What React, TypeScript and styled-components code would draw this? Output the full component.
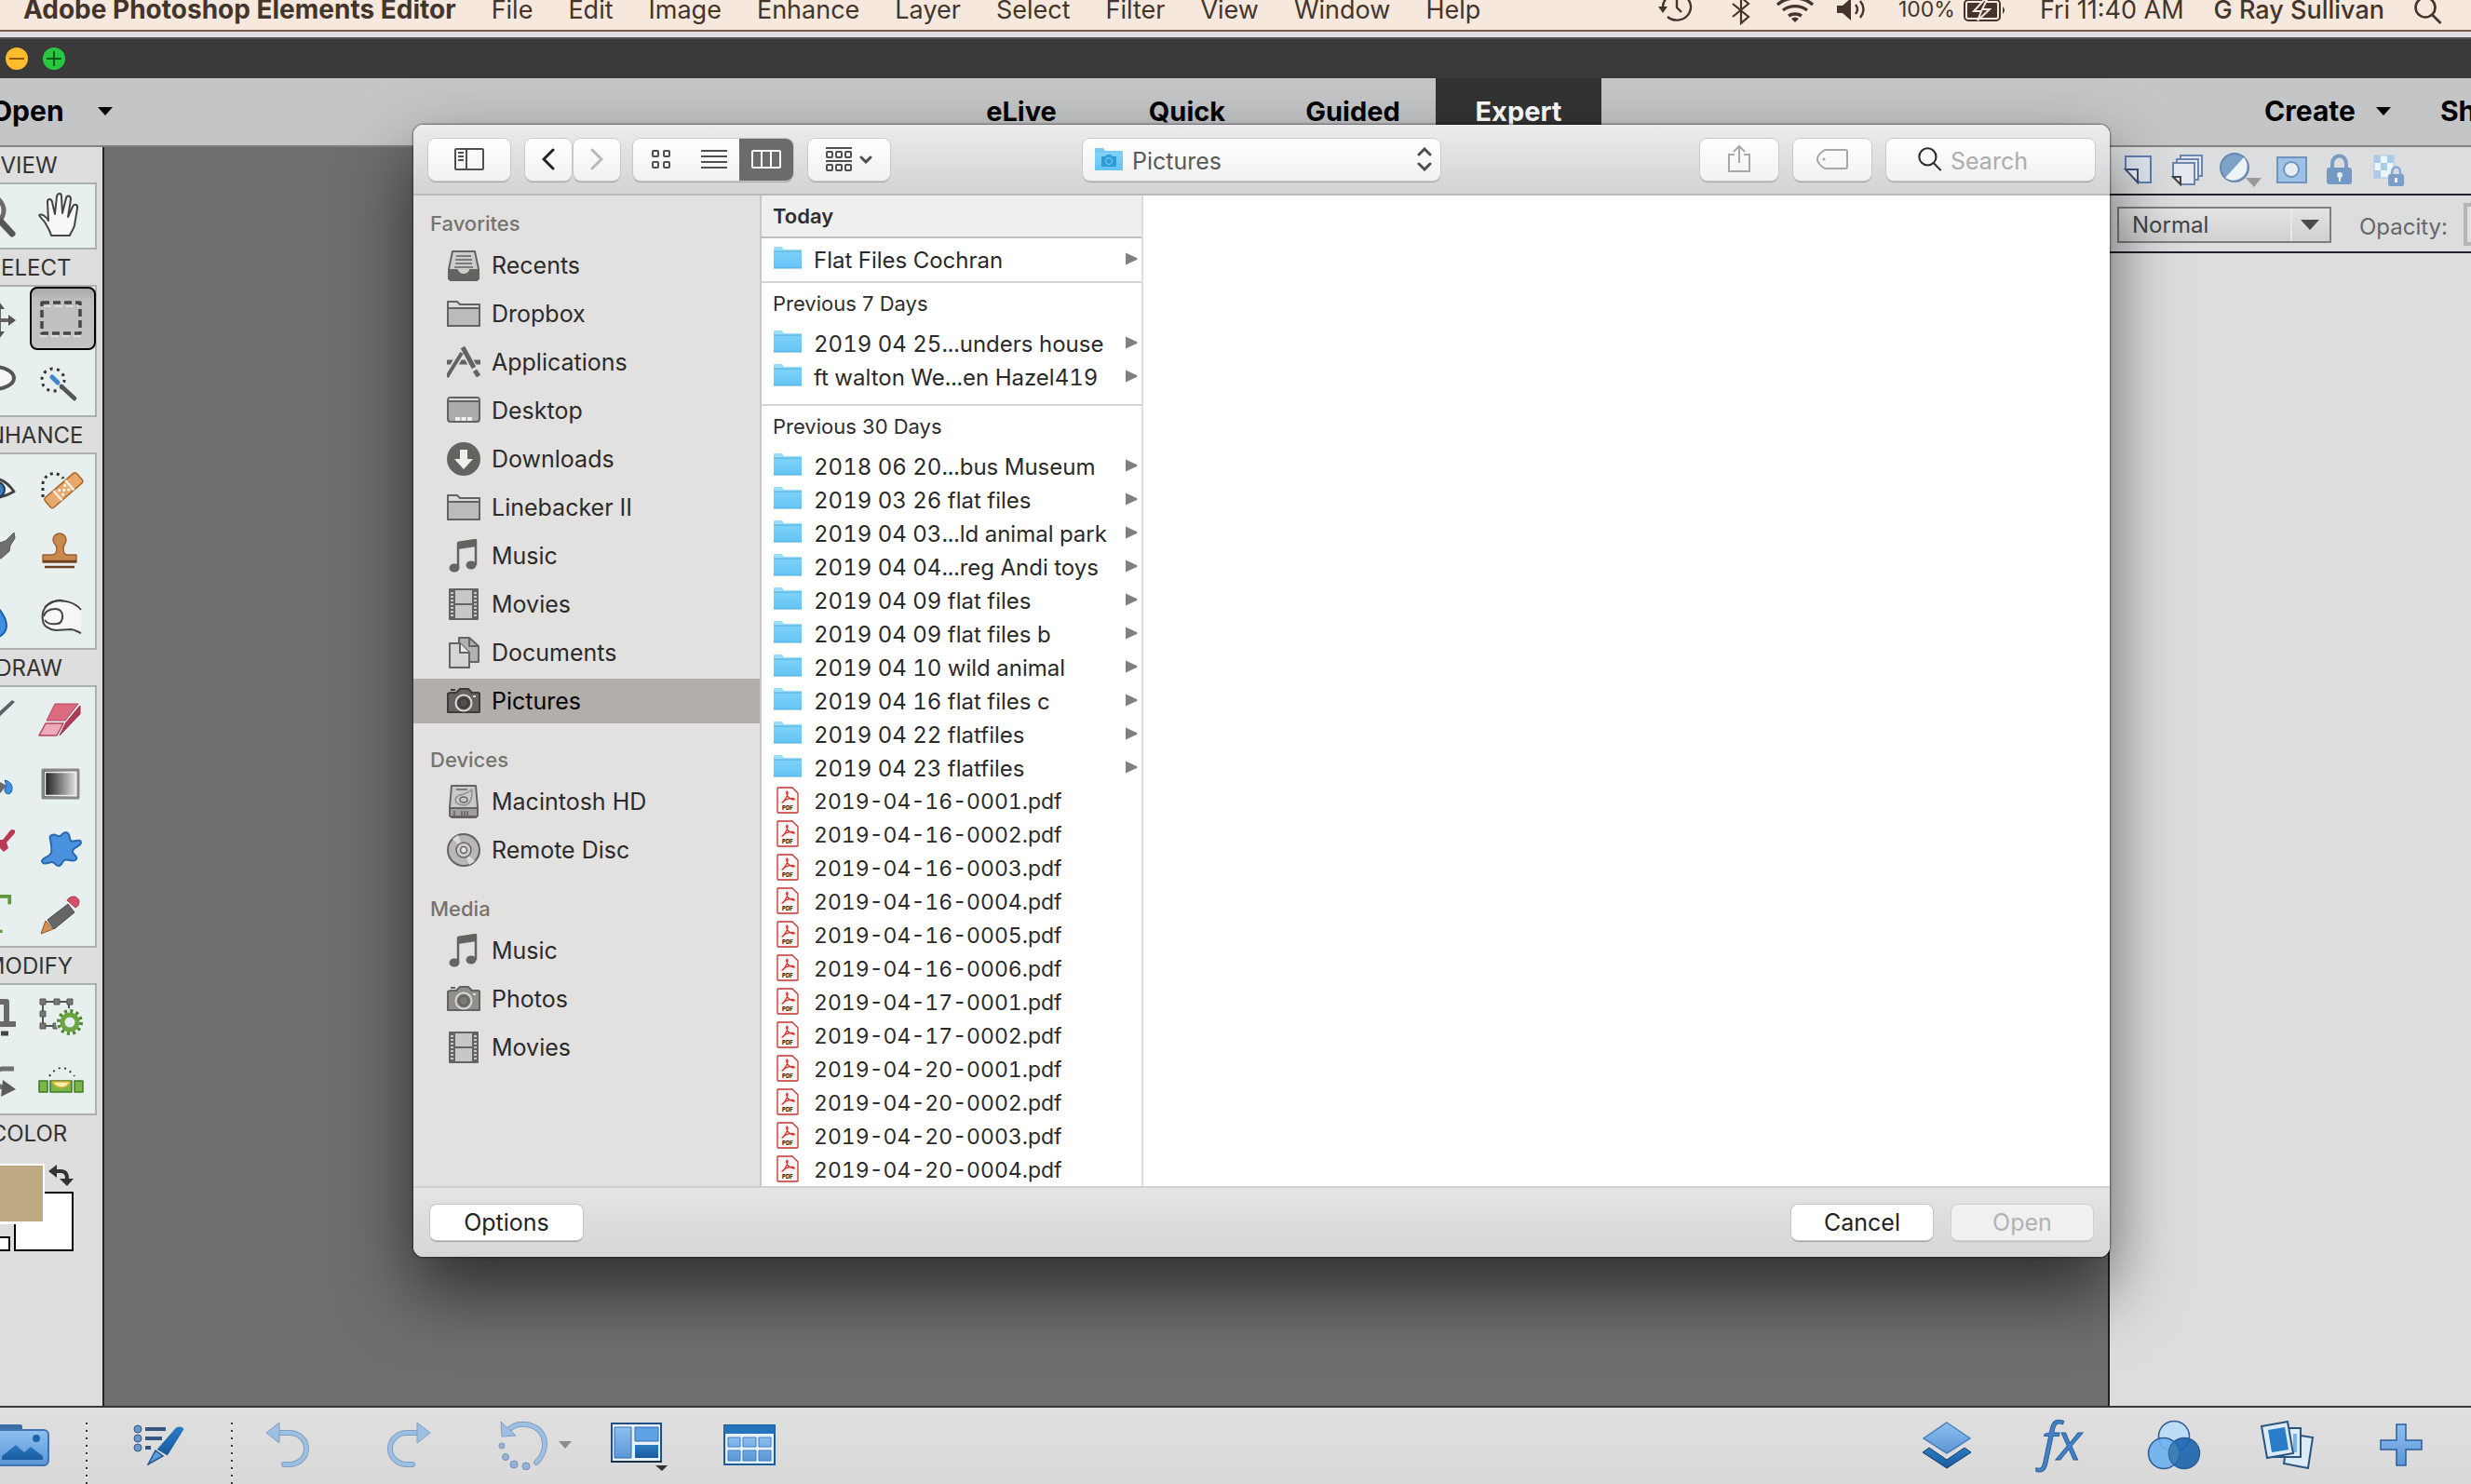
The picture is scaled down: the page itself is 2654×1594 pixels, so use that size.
import React from 'react';
import styled, { createGlobalStyle, css } from 'styled-components';

const GlobalStyle = createGlobalStyle`
  * { box-sizing: border-box; }
  body { margin: 0; background: #6e6e6e; overflow: hidden; }
  button, select, input { font: inherit; color: inherit; margin: 0; }
  button { border: 0; padding: 0; background: none; }
  ul { list-style: none; margin: 0; padding: 0; }
  h2, h3 { margin: 0; font-weight: inherit; font-size: inherit; }
  svg { display: block; flex: none; }
`;

const Screen = styled.div`
  position: relative;
  display: flex;
  flex-direction: column;
  height: 100vh;
  overflow: hidden;
  font-family: Inter, 'Liberation Sans', sans-serif;
  color: #2a2a2a;
`;

/* ---------- system menu bar ---------- */

const MenuBar = styled.nav`
  flex: none;
  display: flex;
  align-items: flex-start;
  justify-content: space-between;
  height: 34px;
  padding: 0 31px 0 25px;
  background: #f6e8dc;
  border-bottom: 2px solid #79594c;
  color: #43352b;
  font-size: 27px;
  line-height: 21px;
  white-space: nowrap;
`;

const MenuGroup = styled.div<{ $gap: number }>`
  display: flex;
  align-items: center;
  gap: ${(p) => p.$gap}px;
  height: 21px;
`;

const MenuItem = styled.button<{ $app?: boolean }>`
  line-height: 21px;
  font-size: ${(p) => (p.$app ? 28 : 27)}px;
  font-weight: ${(p) => (p.$app ? 700 : 400)};
`;

const Battery = styled.div`
  display: flex;
  align-items: center;
  gap: 9px;
  padding-right: 4px;
  font-size: 23px;
`;

const UserName = styled.span`
  font-weight: 500;
`;

/* ---------- editor window ---------- */

const TitleBar = styled.div`
  flex: none;
  display: flex;
  align-items: center;
  gap: 16px;
  height: 50px;
  padding: 8px 6px 0;
  background: linear-gradient(#dedee2 0 6px, #55565a 6px 8px, #3a3a3a 8px);
`;

const Light = styled.button<{ $color: string; $mark: string }>`
  display: grid;
  place-items: center;
  width: 24px;
  height: 24px;
  border-radius: 50%;
  background: ${(p) => p.$color};
  color: ${(p) => p.$mark};
`;

const ModeBar = styled.header`
  flex: none;
  display: grid;
  grid-template-columns: 1fr auto 1fr;
  width: calc(100% + 74px);
  height: 74px;
  padding-bottom: 2px;
  background: #c4c5c7;
  border-bottom: 2px solid #808284;
  color: #000;
  font-size: 29px;
  font-weight: 700;
`;

const ModeSide = styled.div<{ $end?: boolean }>`
  display: flex;
  align-items: center;
  gap: 53px;
  font-size: 30px;
  justify-content: ${(p) => (p.$end ? 'flex-end' : 'flex-start')};
  ${(p) => (p.$end ? 'padding-right: 22px;' : 'margin-left: -10px;')}
`;

const DropButton = styled.button<{ $gap: number }>`
  display: flex;
  align-items: center;
  gap: ${(p) => p.$gap}px;
`;

const Tabs = styled.div`
  display: flex;
`;

const Tab = styled.button<{ $on?: boolean }>`
  width: 178px;
  ${(p) => p.$on && css`background: #333; color: #fff;`}
`;

const Workspace = styled.div`
  flex: 1;
  display: flex;
  min-height: 0;
`;

const ToolPanel = styled.aside`
  flex: none;
  width: 160px;
  margin-left: -48px;
  padding: 0 6px;
  background: #dedede;
  border-right: 2px solid #242424;
`;

const ToolHeading = styled.h2`
  height: 38px;
  line-height: 40px;
  text-align: center;
  font-size: 24px;
  color: #333;
`;

const ToolBox = styled.div`
  display: grid;
  grid-template-columns: 1fr 1fr;
  grid-auto-rows: 70px;
  padding: 1px 0;
  background: #e8efef;
  box-shadow: inset 0 0 0 2px #acb0b0;
`;

const Tool = styled.button<{ $on?: boolean }>`
  display: grid;
  place-items: center;
  margin: 1px;
  ${(p) =>
    p.$on &&
    css`
      border: 2px solid #000;
      border-radius: 8px;
      background: linear-gradient(#a9a9a9, #bfbfbf 20%, #c2c2c2);
    `}
`;

const Swatches = styled.div`
  display: flex;
  padding-top: 14px;
`;

const Canvas = styled.main`
  flex: 1;
  background: #6e6e6e;
`;

const LayerPanel = styled.aside`
  flex: none;
  width: 390px;
  background: #dcdddf;
  border-left: 2px solid #202022;
`;

const LayerTools = styled.div`
  display: flex;
  align-items: center;
  height: 52px;
  padding-left: 14px;
  gap: 10px;
  border-bottom: 2px solid #20202a;
`;

const BlendRow = styled.div`
  display: flex;
  align-items: center;
  height: 62px;
  padding: 2px 0 0 8px;
  border-bottom: 2px solid #20202a;
  font-size: 24px;
  color: #666;
`;

const BlendBox = styled.div`
  flex: none;
  display: flex;
  align-items: center;
  width: 230px;
  height: 39px;
  margin-right: 30px;
  padding-right: 11px;
  border: 2px solid #7c7e80;
  background: linear-gradient(#e4e4e4, #d0d0d0);
`;

const BlendSelect = styled.select`
  appearance: none;
  flex: 1;
  height: 35px;
  margin-right: 9px;
  padding: 2px 14px 0;
  border: 0;
  border-right: 2px solid #e8e8e8;
  background: none;
  font-size: 24px;
  line-height: 30px;
  color: #444;
`;

const OpacityLabel = styled.label`
  padding-top: 4px;
`;

const OpacityInput = styled.input`
  flex: none;
  width: 100px;
  height: 46px;
  margin-left: 17px;
  border: 4px solid #b4b5b7;
  background: #e0e0e0;
`;

/* ---------- bottom bar ---------- */

const BottomBar = styled.footer`
  flex: none;
  display: flex;
  justify-content: space-between;
  height: 84px;
  border-top: 2px solid #38383b;
  background: linear-gradient(#dfdfdf, #d9d9d9);
`;

const BarGroup = styled.div`
  display: flex;
  margin-left: -48px;
  padding-right: 14px;
`;

const BarButton = styled.button<{ $w: number }>`
  display: grid;
  place-items: center;
  width: ${(p) => p.$w}px;
  height: 80px;
`;

const Dots = styled.div`
  width: 2px;
  margin-top: 16px;
  background: repeating-linear-gradient(#333 0 2px, #f6f6f6 2px 4px, transparent 4px 8px);
`;

/* ---------- open dialog ---------- */

const Dialog = styled.section`
  position: absolute;
  inset: 134px 388px 244px 444px;
  display: flex;
  flex-direction: column;
  overflow: hidden;
  border-radius: 11px;
  background: #fff;
`;

const DialogShadow = styled.div`
  position: absolute;
  inset: 134px 388px 244px 444px;
  border-radius: 11px;
  box-shadow: 0 0 2px 1px rgba(0, 0, 0, 0.45), 0 36px 76px rgba(0, 0, 0, 0.58);
`;

const Toolbar = styled.div`
  flex: none;
  display: flex;
  align-items: center;
  height: 76px;
  padding: 0 16px;
  background: linear-gradient(#edebed, #d4d2d5);
  border-bottom: 2px solid #bab9bb;
  font-size: 25px;
`;

const Spacer = styled.div<{ $grow?: number }>`
  flex: ${(p) => p.$grow ?? 1} 1 0;
`;

const Cluster = styled.div<{ $gap: number; $mr?: number }>`
  display: flex;
  gap: ${(p) => p.$gap}px;
  margin-right: ${(p) => p.$mr ?? 0}px;
`;

const raised = css`
  height: 45px;
  border-radius: 8px;
  background: linear-gradient(#fff, #f2f1f2);
  box-shadow: 0 0 0 1px #c9c7ca, 0 2px 1px #a8a6a9;
`;

const ToolbarButton = styled.button<{ $w: number }>`
  ${raised}
  display: flex;
  align-items: center;
  justify-content: center;
  gap: 8px;
  width: ${(p) => p.$w}px;
`;

const Segments = styled.div`
  ${raised}
  display: flex;
  overflow: hidden;
`;

const Segment = styled.button<{ $w: number; $on?: boolean }>`
  display: grid;
  place-items: center;
  width: ${(p) => p.$w}px;
  height: 45px;
  ${(p) => p.$on && css`background: #6b6b6b;`}
  & + & { border-left: ${(p) => (p.$on ? 0 : 2)}px solid #dcdcdc; }
`;

const PathBox = styled.div`
  ${raised}
  display: flex;
  align-items: center;
  width: 384px;
  padding: 0 9px 0 13px;
`;

const PathSelect = styled.select`
  appearance: none;
  flex: 1;
  height: 43px;
  padding: 3px 10px 0;
  border: 0;
  background: none;
  font-size: 25px;
  color: #5a595a;
`;

const SearchBox = styled.label`
  ${raised}
  display: flex;
  align-items: center;
  gap: 9px;
  width: 224px;
  padding-left: 34px;
`;

const SearchInput = styled.input`
  min-width: 0;
  flex: 1;
  padding: 3px 0 0;
  border: 0;
  background: none;
  font-size: 25px;
  &::placeholder { color: #adacad; opacity: 1; }
`;

const Body = styled.div`
  flex: 1;
  display: flex;
  min-height: 0;
`;

const Sidebar = styled.nav`
  flex: none;
  width: 374px;
  padding-top: 14px;
  background: #e2e1df;
  border-right: 2px solid #c8c7c6;
`;

const SideGroup = styled.div`
  margin-bottom: 23px;
`;

const SideHeading = styled.h3`
  padding-left: 18px;
  margin-bottom: 5px;
  line-height: 32px;
  font-size: 22px;
  font-weight: 500;
  color: #75736f;
`;

const SideList = styled.ul`
  display: flex;
  flex-direction: column;
  gap: 4px;
`;

const SideItem = styled.button<{ $on?: boolean }>`
  display: flex;
  align-items: center;
  gap: 12px;
  width: 100%;
  height: 48px;
  padding-left: 36px;
  font-size: 25px;
  color: ${(p) => (p.$on ? '#000' : '#2c2b2a')};
  background: ${(p) => (p.$on ? '#b2aeaa' : 'transparent')};
  svg { color: ${(p) => (p.$on ? '#3d3b39' : '#656360')}; }
`;

const FileColumn = styled.div`
  flex: none;
  width: 410px;
  overflow: hidden;
  background: #fff;
  border-right: 2px solid #dcdcdc;
`;

const FileHeading = styled.h3<{ $top?: boolean }>`
  height: 44px;
  line-height: 44px;
  padding-left: 12px;
  font-size: 22px;
  color: #2e2e2e;
  ${(p) =>
    p.$top &&
    css`
      height: 46px;
      font-weight: 600;
      background: #efefef;
      border-bottom: 2px solid #bdbdbd;
    `}
`;

const FileList = styled.ul<{ $short?: boolean }>`
  padding: ${(p) => (p.$short ? '5px 0' : '3px 0 11px')};
  border-bottom: 2px solid #d4d4d4;
`;

const FileRow = styled.li<{ $size: number }>`
  display: flex;
  align-items: center;
  gap: 13px;
  height: 36px;
  padding: 0 4px 0 13px;
  font-size: ${(p) => p.$size}px;
  font-variant-numeric: tabular-nums;
  white-space: nowrap;
`;

const FileName = styled.span`
  flex: 1;
`;

const Actions = styled.div`
  flex: none;
  display: flex;
  align-items: center;
  gap: 20px;
  height: 76px;
  padding: 0 18px;
  background: linear-gradient(#e4e4e4, #d6d6d6);
  border-top: 2px solid #cfcfcf;
  font-size: 25px;
`;

const ActionButton = styled.button<{ $w: number }>`
  width: ${(p) => p.$w}px;
  height: 38px;
  border-radius: 7px;
  background: #fff;
  color: #232323;
  box-shadow: 0 0 0 1px #c6c6c6, 0 2px 1px #a2a2a2;
  &:disabled {
    background: #f0f0f0;
    color: #b2b2b2;
    box-shadow: 0 0 0 1px #d0d0d0, 0 2px 1px #c0c0c0;
  }
`;

/* ---------- drawings ---------- */

const Gradients = () => (
  <svg width="0" height="0" aria-hidden="true">
    <defs>
      <linearGradient id="lb" x1="0" y1="0" x2="0" y2="1"><stop offset="0" stopColor="#8fc0f0" /><stop offset="1" stopColor="#5a96d6" /></linearGradient>
      <linearGradient id="db" x1="0" y1="0" x2="0" y2="1"><stop offset="0" stopColor="#2a7cc4" /><stop offset="1" stopColor="#1a5a9e" /></linearGradient>
      <linearGradient id="fold" x1="0" y1="0" x2="0" y2="1"><stop offset="0" stopColor="#7fd2fa" /><stop offset="1" stopColor="#62c4f6" /></linearGradient>
      <linearGradient id="bw"><stop offset="0" stopColor="#111" /><stop offset="1" stopColor="#eee" /></linearGradient>
    </defs>
  </svg>
);

const HiddenDefs = styled.div`
  position: absolute;
  width: 0;
  height: 0;
`;

const Triangle = ({ w = 16, h = 9, fill = '#000' }: { w?: number; h?: number; fill?: string }) => (
  <svg width={w} height={h} viewBox="0 0 16 9" preserveAspectRatio="none"><path d="M0 0h16L8 9z" fill={fill} /></svg>
);

const ClockIcon = () => (
  <svg width="52" height="32" viewBox="0 0 52 32" fill="none" stroke="currentColor" strokeWidth="2.4">
    <path d="M5 13a15 14 0 1 1 5 10" /><path d="M20 4v9l5 5" /><path d="M0 12h10l-5 7z" fill="currentColor" stroke="none" />
  </svg>
);
const BluetoothIcon = () => (
  <svg width="26" height="32" viewBox="0 0 26 32" fill="none" stroke="currentColor" strokeWidth="2.2">
    <path d="M4 9l17 14-8 7V2l8 7L4 23" />
  </svg>
);
const WifiIcon = () => (
  <svg width="42" height="32" viewBox="0 0 42 32" fill="none" stroke="currentColor" strokeWidth="3.4">
    <path d="M2 10a27 24 0 0 1 38 0M8 16a19 16 0 0 1 26 0M14 22a11 9 0 0 1 14 0" /><path d="M21 29l-4-4a6 6 0 0 1 8 0z" fill="currentColor" stroke="none" />
  </svg>
);
const VolumeIcon = () => (
  <svg width="34" height="32" viewBox="0 0 34 32" fill="none" stroke="currentColor" strokeWidth="2.4">
    <path d="M0 11h6l9-8v24l-9-8H0z" fill="currentColor" stroke="none" /><path d="M20 10q4 5 0 10M25 6q7 9 0 18" />
  </svg>
);
const BatteryIcon = () => (
  <svg width="46" height="26" viewBox="0 0 46 26">
    <rect x="1" y="2" width="38" height="22" rx="4" fill="none" stroke="currentColor" strokeWidth="2" />
    <rect x="4" y="5" width="32" height="16" rx="1" fill="currentColor" /><path d="M42 9q4 4 0 8z" fill="currentColor" />
    <path d="M22 2L11 14h8l-4 10L28 12h-8l5-10z" fill="currentColor" stroke="#f6e8dc" strokeWidth="2" />
  </svg>
);
const LoupeIcon = ({ s = 30, w = 2.6 }: { s?: number; w?: number }) => (
  <svg width={s} height={s} viewBox="0 0 30 30" fill="none" stroke="currentColor" strokeWidth={w}>
    <circle cx="12" cy="12" r="10.500" /><path d="M19.500 20l9 9" />
  </svg>
);

/* editor tools */
const T = ({ children }: { children: React.ReactNode }) => (
  <svg width="48" height="48" viewBox="2 0 48 48" fill="none" strokeLinejoin="round" overflow="visible">{children}</svg>
);
const toolArt: Record<string, React.ReactNode> = {
  Zoom: <T><circle cx="20" cy="18" r="15" stroke="#6b6b6b" strokeWidth="5" fill="#eef3f5" /><path d="M32 30l12 13" stroke="#555" strokeWidth="7" strokeLinecap="round" /></T>,
  Hand: <T><path d="M13 45c-1-5-4-9-6-13-2-4-6-6-7-9 3-2 8 2 10 6L9 9c0-4 4-4 5 0l3 13L19 3c1-4 5-4 5 0l1 18 4-16c1-4 5-3 5 1l-3 19 5-11c2-4 6-2 5 2l-3 18c-1 5-4 7-5 11z" fill="#f7f7f7" stroke="#444" strokeWidth="2" /></T>,
  Move: <T><path d="M30 10v32M12 26h34" stroke="#666" strokeWidth="4" /><path d="M30 6l6 8H24zM30 46l6-8H24zM48 26l-8-6v12z" fill="#555" /></T>,
  Marquee: <T><rect x="3" y="7" width="41" height="33" stroke="#444" strokeWidth="3.500" strokeDasharray="8 4" /><path d="M5 11h38M1 43h44" stroke="#e6e6e6" strokeWidth="1.500" strokeDasharray="8 4" /></T>,
  Lasso: <T><ellipse cx="24" cy="18" rx="22" ry="12" stroke="#555" strokeWidth="4" fill="#f4f6f7" /></T>,
  Wand: <T><circle cx="15" cy="20" r="12" stroke="#333" strokeWidth="3" strokeDasharray="3 4.540" /><path d="M12 15l12 11" stroke="#e8efef" strokeWidth="8" /><path d="M14 17l6 6" stroke="#3f87d0" strokeWidth="5" strokeLinecap="round" /><path d="M24 27l14 13" stroke="#555" strokeWidth="4.500" strokeLinecap="round" /></T>,
  Eye: <T><path d="M-4 24Q28 4 46 30 26 42-4 34z" fill="#f4f6f7" stroke="#444" strokeWidth="3" /><circle cx="28" cy="28" r="8" fill="#3b7cb8" stroke="#235" strokeWidth="2" /></T>,
  Heal: <T><path d="M4 36V22a12 12 0 0 1 22-6" stroke="#333" strokeWidth="3" strokeDasharray="3 4" /><g transform="rotate(-41 26 29)"><rect x="4" y="22" width="45" height="14" rx="3" fill="#e9a86c" stroke="#a5692f" strokeWidth="1.500" /><path d="M18 22v14M35 22v14" stroke="#fbeee0" strokeWidth="2.500" /><g fill="#fff"><circle cx="23" cy="26" r="1.500" /><circle cx="27" cy="29" r="1.500" /><circle cx="31" cy="26" r="1.500" /><circle cx="23" cy="32" r="1.500" /><circle cx="31" cy="32" r="1.500" /></g></g></T>,
  SmartBrush: <T><path d="M46 4l-9 9-9 3-8 12 12 4 9-8 1-6 5-8z" fill="#6f6f6f" stroke="#555" /></T>,
  Stamp: <T><path d="M15 12a7 7 0 1 1 14 0c0 4-3 5-3 9 0 5 2 7 4 7h10v8H4v-8h10c3 0 5-3 5-7 0-4-4-5-4-9z" fill="#c98a50" stroke="#9c6230" strokeWidth="1.500" /><path d="M4 35h36M6 41h32" stroke="#6d4020" strokeWidth="2.500" /></T>,
  Blur: <T><path d="M22 6c10 12 16 20 16 28a14 12 0 0 1-32 0C6 26 12 18 22 6z" fill="#3f8fe0" stroke="#1d5fa8" strokeWidth="2" /></T>,
  Sponge: <T><path d="M45 17C38 8 24 6 16 8 8 10 2 18 4 28c0 6 6 10 14 11l16-1c4 0 8 3 11 4" fill="#f7f7f7" stroke="#444" strokeWidth="2" /><path d="M6 14Q20 4 26 8M5 24c2-8 14-10 18-6 4 5 2 14-4 14-6 1-10 0-13-4" stroke="#444" strokeWidth="2" /></T>,
  Brush: <T><path d="M47 6L26 26l-6 8-12 8 6-14 10-6L44 4z" fill="#5d6063" /></T>,
  Eraser: <T><path d="M17 8h25L28 26H8z" fill="#dc6b80" stroke="#b8455c" /><path d="M44 10v9L22 42l7-14z" fill="#b23a56" stroke="#96304a" /><path d="M7 29h19l-7 13H0z" fill="#eeaab8" stroke="#b8455c" strokeWidth="1.500" /></T>,
  Bucket: <T><path d="M10 10l28 16-12 14-20-8z" fill="#6a6a6a" /><path d="M36 20c6 1 10 6 7 13-2 3-7 2-7-2 0-3 3-4 0-11z" fill="#3f8fe0" stroke="#1d5fa8" /></T>,
  Gradient: <T><rect x="4" y="9" width="38" height="30" fill="url(#bw)" stroke="#888" strokeWidth="3" /><rect x="6.500" y="11.500" width="33" height="25" stroke="#eee" strokeWidth="1.500" /></T>,
  Picker: <T><path d="M26 14l8 0 8-10c4-3 7 1 4 4l-8 9 2 6-5 4-10-10z" fill="#b93a52" /><path d="M30 20L10 42" stroke="#666" strokeWidth="4" /></T>,
  Shape: <T><path d="M12 14c-2-5 4-7 8-4 4 2 4-4 9-4 5 1 3 7 5 9 4 2 11-3 11 2 0 4-8 5-9 9-1 4 6 5 4 9-3 4-9-1-13 1-3 2-2 6-6 6s-4-5-8-4c-4 1-9 3-10-1 0-4 8-4 10-9 1-5 0-9-1-14z" fill="#4a92dd" stroke="#2a68ad" strokeWidth="2" /></T>,
  Type: <T><text x="2" y="44" fontFamily="DejaVu Serif, serif" fontSize="56" fontWeight="700" fill="#5d9a3c">T</text></T>,
  Pencil: <T><path d="M9 30l22-17 7 9-22 18z" fill="#666" stroke="#484848" /><path d="M30 9c3-5 11-6 13 1 0 4-2 6-4 7z" fill="#d4506a" stroke="#a83850" /><path d="M7 31l8 9-13 5z" fill="#d29055" stroke="#905a28" /></T>,
  Crop: <T><path d="M12 8h26v26M16 32h32" stroke="#6a6a6a" strokeWidth="6" /><path d="M32 42h8" stroke="#444" strokeWidth="5" /></T>,
  Recompose: <T><path d="M4 8h28v26H4z" stroke="#555" strokeWidth="2" /><path d="M1 5h6v6H1zM16 5h6v6h-6zM30 5h6v6h-6zM1 18h6v6H1zM1 31h6v6H1zM15 31h6v6h-6z" fill="#777" stroke="#555" /><circle cx="33" cy="30" r="15" fill="#e8efef" /><circle cx="33" cy="30" r="12" stroke="#4c8a2c" strokeWidth="4" strokeDasharray="3 3.280" /><circle cx="33" cy="30" r="8" stroke="#6aa544" strokeWidth="5" /></T>,
  Move2: <T><path d="M46 10H34q-10 1-12 10 2 8 18 12" stroke="#707070" strokeWidth="5" /><path d="M34 22l14 10-16 8z" fill="#5c5c5c" /></T>,
  Straighten: <T><path d="M11 18Q24 0 38 18" stroke="#333" strokeWidth="2" strokeDasharray="2 4.500" /><path d="M0 23h9v12H0zM12 23h23v12H12zM38 23h9v12h-9z" fill="#7ab648" stroke="#3f7a22" strokeWidth="1.500" /><path d="M14 24h19q-3 6-9 6t-10-6z" fill="#fff2b0" stroke="#e0b030" strokeWidth="1.500" /></T>,
};

/* layer panel */
const layerArt: [string, React.ReactNode][] = [
  ['New layer', <svg width="40" height="36" viewBox="0 0 40 36"><path d="M3 3h27v28H18L3 17z" fill="#dfe6ef" stroke="#5f7fae" strokeWidth="2" /><path d="M3 17h13v14z" fill="#f0f3f7" stroke="#3d5478" strokeWidth="2" /></svg>],
  ['New group', <svg width="42" height="36" viewBox="0 0 42 36" fill="#e6eaf0" stroke="#6d86ad" strokeWidth="2"><path d="M12 2h23v22H12z" /><path d="M8 6h23v22H8z" /><path d="M4 10h23v23H13l-9-8z" /><path d="M4 25h8v8z" stroke="#444" /></svg>],
  ['Adjustment layer', <svg width="48" height="40" viewBox="0 0 48 40"><circle cx="18" cy="17" r="15" fill="#7da2c8" stroke="#6488b0" strokeWidth="2" /><path d="M28 6A15 15 0 0 1 8 28z" fill="#eef2f7" /><path d="M30 28h17l-8 10z" fill="#9a9a9a" /></svg>],
  ['Add mask', <svg width="42" height="36" viewBox="0 0 42 36"><rect x="6" y="4" width="31" height="27" fill="#9dc2e6" stroke="#6f94bd" strokeWidth="2" /><circle cx="21" cy="17" r="8" fill="#e8eef4" stroke="#6f94bd" strokeWidth="2" /></svg>],
  ['Lock', <svg width="42" height="36" viewBox="0 0 42 36"><path d="M13 17v-6a7 8 0 0 1 15 0v6" fill="none" stroke="#7a9cc2" strokeWidth="4" /><rect x="7" y="15" width="27" height="18" rx="3" fill="#7399c4" /><circle cx="21" cy="23" r="3" fill="#e4ecf4" /><path d="M20 23h2v7h-2z" fill="#e4ecf4" /></svg>],
  ['Lock transparency', <svg width="42" height="38" viewBox="0 0 42 38"><rect x="6" y="3" width="21" height="24" fill="#eef5fb" stroke="#a6c5e0" /><path d="M6 3h7v8H6zM20 3h7v8h-7zM13 11h7v8h-7zM6 19h7v8H6z" fill="#a9cce8" /><path d="M25 24v-3a4 5 0 0 1 9 0v3" fill="none" stroke="#86a8cc" strokeWidth="2.500" /><rect x="21" y="23" width="17" height="13" rx="2" fill="#7b9fc8" /><path d="M28 27h3v5h-3z" fill="#eef" /></svg>],
];

/* dialog icons */
const S = ({ children }: { children: React.ReactNode }) => (
  <svg width="36" height="36" viewBox="0 0 36 36" fill="none" stroke="currentColor" strokeWidth="2" strokeLinejoin="round">{children}</svg>
);
const folderLine = <S><path d="M1 31V5h10l3 3h21v23z" fill="#dddcda" /><path d="M1 12h34v19H1z" fill="#bdbbb9" /></S>;
const music = <S><path d="M12 30V4l19-3v27" strokeWidth="2.500" /><path d="M12 3l19-3v8l-19 3z" fill="currentColor" stroke="none" /><ellipse cx="8" cy="31" rx="5.500" ry="4.500" fill="currentColor" stroke="none" /><ellipse cx="26" cy="28" rx="5.500" ry="4.500" fill="currentColor" stroke="none" /></S>;
const movies = <S><path d="M3 2h30v32H3z" fill="#c9c7c5" /><path d="M8 2v32M28 2v32M8 18h20" /><path d="M5.500 3v30M30.500 3v30" strokeWidth="3.500" strokeDasharray="2 2" /></S>;
const camera = <S><path d="M1 10l3-1h6l4-4h9l4 4h7l1 1v20H1z" fill="currentColor" fillOpacity="0.650" /><path d="M4 6h5" /><circle cx="18" cy="20" r="8.500" stroke="#dddbd8" strokeWidth="2" fill="currentColor" fillOpacity="0.500" /><circle cx="18" cy="20" r="5" /><path d="M28 13h3" stroke="#dddbd8" /></S>;
const sideArt: Record<string, React.ReactNode> = {
  Recents: <S><path d="M6 3h24l4 19v10l-2 2H4l-2-2V22z" fill="#cfcdcb" /><path d="M3 23h8q2 5 7 5t7-5h8l1 9-2 2H4l-2-2z" fill="currentColor" /><path d="M10 8h16M9 12h18M9 16h18M8 20h20" strokeWidth="1.600" /></S>,
  Dropbox: folderLine,
  'Linebacker II': folderLine,
  Applications: <S><path d="M0 18h36" strokeWidth="5" /><path d="M17 4L3 31" stroke="#e2e1df" strokeWidth="8" /><path d="M18 4l15 28" stroke="#e2e1df" strokeWidth="8" /><path d="M16 8L3 29l-3 5" strokeWidth="4" /><path d="M17 2l12 22M30 27l4 6" strokeWidth="5" /></S>,
  Desktop: <S><rect x="1" y="4" width="34" height="26" rx="3" fill="#adabaa" /><path d="M2 8V6l1-1h30l1 1v2z" fill="#dddcda" stroke="none" /><path d="M1 8h34" /><path d="M9 25h5v4H9zM15.500 25h5v4h-5zM22 25h5v4h-5z" fill="#eeedeb" stroke="none" /></S>,
  Downloads: <S><circle cx="18" cy="18" r="18" fill="currentColor" stroke="none" /><path d="M14 8h8v10h6L18 29 8 18h6z" fill="#f0efed" stroke="none" /></S>,
  Music: music,
  Movies: movies,
  Documents: <S><path d="M13 2h11l10 9v17H13z" fill="#b3b1af" /><path d="M24 2v9h10" /><path d="M3 8h11l10 10v16H3z" fill="#d6d4d2" /><path d="M14 8v10h10" fill="#eceae8" /></S>,
  Pictures: camera,
  Photos: camera,
  'Macintosh HD': <S><path d="M5 1h26l2 23v8l-2 3H5l-2-3v-8z" fill="#cbc9c7" /><path d="M3 25h30v8l-1 1H4l-1-1z" fill="#a19f9d" /><path d="M10 5h12M8 28v5M16 28v5M19 28v5M22 28v5" strokeWidth="1.600" /><path d="M27 5q1 16-9 17-9-1-9-6 1-5 9-6 6-2 9-5z" stroke="#918f8d" strokeWidth="1.500" /><ellipse cx="18" cy="16" rx="4" ry="3" strokeWidth="1.500" /></S>,
  'Remote Disc': <S><circle cx="18" cy="18" r="17" fill="#b9b7b5" /><path d="M18 18L6 6l6-4zM18 18l12 12-6 4z" fill="#dddbd9" stroke="none" /><circle cx="18" cy="18" r="8" fill="#cfcdcb" strokeWidth="1.500" /><circle cx="18" cy="18" r="3.500" fill="#e4e3e1" strokeWidth="1.500" /></S>,
};

const FolderIcon = () => (
  <svg width="30" height="28" viewBox="0 1 30 28">
    <path d="M0 2q0-1 1-1h8l2 3h18q1 0 1 1v18H0z" fill="#9adcfb" /><path d="M0 6h30v18H0z" fill="url(#fold)" />
    <path d="M0 6h30M0 24h30" stroke="#4faad8" strokeWidth="1" />
  </svg>
);
const PdfIcon = () => (
  <svg width="30" height="32" viewBox="0 0 30 32">
    <path d="M5 1h15l6 6v20q0 1-1 1H5q-1 0-1-1V2q0-1 1-1z" fill="#fbf7f6" stroke="#c9302c" strokeWidth="1.300" />
    <path d="M9 17c3-2 6-7 6-10 0-3-2-2-1 1 1 4 5 6 8 6 1-2-5-2-9 0-2 1-4 4-4 3z" fill="none" stroke="#e0322c" strokeWidth="1.300" />
    <text x="15" y="25" textAnchor="middle" fontFamily="Inter, sans-serif" fontWeight="800" fontSize="6" fill="#222">PDF</text>
  </svg>
);
const Arrow = () => (
  <svg width="13" height="16" viewBox="0 0 13 16"><path d="M0 1q0-1 1 0l11 5q1 1 0 2L1 13q-1 1-1 0z" fill="#808080" /></svg>
);

/* ---------- data ---------- */

const menus = ['File', 'Edit', 'Image', 'Enhance', 'Layer', 'Select', 'Filter', 'View', 'Window', 'Help'];
const toolSections: [string, string[]][] = [
  ['VIEW', ['Zoom', 'Hand']],
  ['SELECT', ['Move', 'Marquee', 'Lasso', 'Wand']],
  ['ENHANCE', ['Eye', 'Heal', 'SmartBrush', 'Stamp', 'Blur', 'Sponge']],
  ['DRAW', ['Brush', 'Eraser', 'Bucket', 'Gradient', 'Picker', 'Shape', 'Type', 'Pencil']],
  ['MODIFY', ['Crop', 'Recompose', 'Move2', 'Straighten']],
];
const sideSections: [string, string[]][] = [
  ['Favorites', ['Recents', 'Dropbox', 'Applications', 'Desktop', 'Downloads', 'Linebacker II', 'Music', 'Movies', 'Documents', 'Pictures']],
  ['Devices', ['Macintosh HD', 'Remote Disc']],
  ['Media', ['Music', 'Photos', 'Movies']],
];
const fileSections: [string, string[]][] = [
  ['Today', ['Flat Files Cochran']],
  ['Previous 7 Days', ['2019 04 25...unders house', 'ft walton We...en Hazel419']],
  ['Previous 30 Days', [
    '2018 06 20...bus Museum', '2019 03 26 flat files', '2019 04 03...ld animal park', '2019 04 04...reg Andi toys',
    '2019 04 09 flat files', '2019 04 09 flat files b', '2019 04 10 wild animal', '2019 04 16 flat files c',
    '2019 04 22 flatfiles', '2019 04 23 flatfiles',
    '2019-04-16-0001.pdf', '2019-04-16-0002.pdf', '2019-04-16-0003.pdf', '2019-04-16-0004.pdf', '2019-04-16-0005.pdf',
    '2019-04-16-0006.pdf', '2019-04-17-0001.pdf', '2019-04-17-0002.pdf', '2019-04-20-0001.pdf', '2019-04-20-0002.pdf',
    '2019-04-20-0003.pdf', '2019-04-20-0004.pdf',
  ]],
];

/* ---------- page ---------- */

const OpenDialog = () => (
  <>
    <DialogShadow />
    <Dialog role="dialog" aria-label="Open">
      <Toolbar>
        <Cluster $gap={16} $mr={14}>
          <ToolbarButton $w={88} aria-label="Toggle sidebar">
            <svg width="32" height="24" viewBox="0 0 32 24" fill="none" stroke="#4f4f4f" strokeWidth="2"><rect x="1" y="1" width="30" height="22" rx="1" /><path d="M13 1v22M4 5h6M4 9h6M4 13h6" /></svg>
          </ToolbarButton>
          <Cluster $gap={2}>
            <ToolbarButton $w={50} aria-label="Back">
              <svg width="14" height="24" viewBox="0 0 14 24" fill="none" stroke="#222" strokeWidth="3" strokeLinecap="round"><path d="M12 2L2 12l10 10" /></svg>
            </ToolbarButton>
            <ToolbarButton $w={50} aria-label="Forward">
              <svg width="14" height="24" viewBox="0 0 14 24" fill="none" stroke="#b9b9b9" strokeWidth="3" strokeLinecap="round"><path d="M2 2l10 10L2 22" /></svg>
            </ToolbarButton>
          </Cluster>
        </Cluster>
        <Cluster $gap={16}>
          <Segments>
            <Segment $w={59} aria-label="Icons">
              <svg width="20" height="20" viewBox="0 0 20 20" fill="none" stroke="#4f4f4f" strokeWidth="2"><rect x="1" y="1" width="6" height="6" rx="1" /><rect x="13" y="1" width="6" height="6" rx="1" /><rect x="1" y="13" width="6" height="6" rx="1" /><rect x="13" y="13" width="6" height="6" rx="1" /></svg>
            </Segment>
            <Segment $w={55} aria-label="List">
              <svg width="28" height="20" viewBox="0 0 28 20" stroke="#4f4f4f" strokeWidth="2"><path d="M0 1h28M0 7h28M0 13h28M0 19h28" /></svg>
            </Segment>
            <Segment $w={58} $on aria-label="Columns">
              <svg width="32" height="20" viewBox="0 0 32 20" fill="none" stroke="#fff" strokeWidth="2"><rect x="1" y="1" width="30" height="18" rx="1" /><path d="M11 1v18M21 1v18" /></svg>
            </Segment>
          </Segments>
          <ToolbarButton $w={88} aria-label="Group by">
            <svg width="28" height="26" viewBox="0 0 28 26" fill="none" stroke="#4f4f4f" strokeWidth="2"><path d="M0 1h28M0 15h28" /><rect x="1" y="5" width="6" height="6" rx="1" /><rect x="11" y="5" width="6" height="6" rx="1" /><rect x="21" y="5" width="6" height="6" rx="1" /><rect x="1" y="19" width="6" height="6" rx="1" /><rect x="11" y="19" width="6" height="6" rx="1" /><rect x="21" y="19" width="6" height="6" rx="1" /></svg>
            <svg width="14" height="9" viewBox="0 0 14 9" fill="none" stroke="#4f4f4f" strokeWidth="3" strokeLinecap="round"><path d="M2 2l5 5 5-5" /></svg>
          </ToolbarButton>
        </Cluster>
        <Spacer $grow={207} />
        <PathBox>
          <svg width="30" height="26" viewBox="0 0 30 26"><path d="M0 2q0-1 1-1h8l2 3h18q1 0 1 1v19H0z" fill="#7cc8ee" /><path d="M0 6h30v19H0z" fill="url(#fold)" /><path d="M7 10h4l2-2h4l2 2h4v11H7z" fill="#2f9bd6" /><circle cx="15" cy="15" r="3.500" fill="none" stroke="#8ad4fa" /></svg>
          <PathSelect aria-label="Folder" defaultValue="Pictures"><option>Pictures</option></PathSelect>
          <svg width="16" height="26" viewBox="0 0 16 26" fill="none" stroke="#4f4f4f" strokeWidth="3" strokeLinecap="round"><path d="M2 8l6-6 6 6M2 18l6 6 6-6" /></svg>
        </PathBox>
        <Spacer $grow={279} />
        <Cluster $gap={16}>
          <ToolbarButton $w={84} aria-label="Share">
            <svg width="24" height="32" viewBox="0 0 24 32" fill="none" stroke="#a9a8a9" strokeWidth="2"><path d="M7 11H1v18h22V11h-6M12 20V2M6 8l6-6 6 6" /></svg>
          </ToolbarButton>
          <ToolbarButton $w={84} aria-label="Tags">
            <svg width="34" height="22" viewBox="0 0 34 22" fill="none" stroke="#a9a8a9" strokeWidth="2"><path d="M9 1h22q2 0 2 2v16q0 2-2 2H9q-8-5-8-10t8-10z" /><circle cx="8" cy="11" r="1.500" fill="#a9a8a9" stroke="none" /></svg>
          </ToolbarButton>
          <SearchBox>
            <LoupeIcon s={26} w={2.4} />
            <SearchInput placeholder="Search" aria-label="Search" />
          </SearchBox>
        </Cluster>
      </Toolbar>
      <Body>
        <Sidebar>
          {sideSections.map(([title, items]) => (
            <SideGroup key={title}>
              <SideHeading>{title}</SideHeading>
              <SideList>
                {items.map((name) => (
                  <li key={name}><SideItem $on={name === 'Pictures'}>{sideArt[name]}{name}</SideItem></li>
                ))}
              </SideList>
            </SideGroup>
          ))}
        </Sidebar>
        <FileColumn>
          {fileSections.map(([title, files], i) => (
            <React.Fragment key={title}>
              <FileHeading $top={i === 0}>{title}</FileHeading>
              <FileList $short={i === 0}>
                {files.map((f) => {
                  const pdf = f.endsWith('.pdf');
                  return (
                    <FileRow key={f} $size={pdf ? 23 : 24}>{pdf ? <PdfIcon /> : <FolderIcon />}<FileName>{f}</FileName>{!pdf && <Arrow />}</FileRow>
                  );
                })}
              </FileList>
            </React.Fragment>
          ))}
        </FileColumn>
      </Body>
      <Actions>
        <ActionButton $w={164}>Options</ActionButton>
        <Spacer />
        <ActionButton $w={152}>Cancel</ActionButton>
        <ActionButton $w={152} disabled>Open</ActionButton>
      </Actions>
    </Dialog>
  </>
);

export default function App() {
  return (
    <Screen>
      <GlobalStyle />
      <HiddenDefs><Gradients /></HiddenDefs>
      <MenuBar>
        <MenuGroup $gap={38}>
          <MenuItem $app>Adobe Photoshop Elements Editor</MenuItem>
          {menus.map((m) => <MenuItem key={m}>{m}</MenuItem>)}
        </MenuGroup>
        <MenuGroup $gap={32}>
          <MenuGroup $gap={24}><ClockIcon /><BluetoothIcon /><WifiIcon /><VolumeIcon /></MenuGroup>
          <Battery>100%<BatteryIcon /></Battery>
          <span>Fri 11:40 AM</span>
          <UserName>G Ray Sullivan</UserName>
          <LoupeIcon />
        </MenuGroup>
      </MenuBar>
      <TitleBar>
        <Light $color="#fdbc2e" $mark="#8f5a00" aria-label="Minimize"><svg width="16" height="16" stroke="currentColor" strokeWidth="2"><path d="M0 8h16" /></svg></Light>
        <Light $color="#27c83f" $mark="#0b5a14" aria-label="Zoom"><svg width="16" height="16" stroke="currentColor" strokeWidth="2"><path d="M0 8h16M8 0v16" /></svg></Light>
      </TitleBar>
      <ModeBar>
        <ModeSide><DropButton $gap={36}>Open<Triangle /></DropButton></ModeSide>
        <Tabs><Tab>eLive</Tab><Tab>Quick</Tab><Tab>Guided</Tab><Tab $on>Expert</Tab></Tabs>
        <ModeSide $end><DropButton $gap={22}>Create<Triangle /></DropButton><DropButton $gap={22}>Share</DropButton></ModeSide>
      </ModeBar>
      <Workspace>
        <ToolPanel>
          {toolSections.map(([title, tools]) => (
            <React.Fragment key={title}>
              <ToolHeading>{title}</ToolHeading>
              <ToolBox>
                {tools.map((t) => <Tool key={t} aria-label={t} $on={t === 'Marquee'}>{toolArt[t]}</Tool>)}
              </ToolBox>
            </React.Fragment>
          ))}
          <ToolHeading>COLOR</ToolHeading>
          <Swatches>
            <svg width="124" height="98" viewBox="0 0 124 98">
              <rect x="58" y="31" width="62" height="62" fill="#fff" stroke="#000" strokeWidth="2" />
              <rect x="26" y="0" width="64" height="65" fill="#fff" /><rect x="28" y="2" width="60" height="60" fill="#bda981" />
              <rect x="34" y="79" width="18" height="14" fill="#fff" stroke="#000" strokeWidth="2" />
              <path d="M102 8h6q6 0 6 8" fill="none" stroke="#333" strokeWidth="4" /><path d="M94 8l9-7v14zM106 16h15l-7 8z" fill="#333" />
            </svg>
          </Swatches>
        </ToolPanel>
        <Canvas />
        <LayerPanel>
          <LayerTools>{layerArt.map(([n, art]) => <button key={n} aria-label={n}>{art}</button>)}</LayerTools>
          <BlendRow>
            <BlendBox>
              <BlendSelect aria-label="Blend mode" defaultValue="Normal"><option>Normal</option></BlendSelect>
              <Triangle w={20} h={11} fill="#4a4a4a" />
            </BlendBox>
            <OpacityLabel htmlFor="opacity">Opacity:</OpacityLabel>
            <OpacityInput id="opacity" />
          </BlendRow>
        </LayerPanel>
      </Workspace>
      <BottomBar>
        <BarGroup>
          <BarButton $w={140} aria-label="Photo bin">
            <svg width="64" height="48" viewBox="0 0 64 48"><path d="M6 10V4q0-2 2-2h24q2 0 2 3v4" fill="#3a6ea5" /><rect x="2" y="8" width="60" height="38" rx="5" fill="url(#lb)" stroke="#3f74b0" strokeWidth="2" /><path d="M12 40v-4l15-12 9 8 7-6 13 10v4z" fill="url(#db)" /><circle cx="49" cy="17" r="4" fill="#1f62a6" /></svg>
          </BarButton>
          <Dots />
          <BarButton $w={154} aria-label="Tool options">
            <svg width="56" height="44" viewBox="0 0 56 44"><g fill="#6b97cf" stroke="#34567f"><circle cx="5" cy="5" r="4" /><circle cx="5" cy="15" r="4" /><circle cx="5" cy="25" r="4" /></g><path d="M13 5h22M13 15h18M13 25h6" stroke="#34567f" strokeWidth="4" /><path d="M46 3q6-3 9 2L37 34l-12-7z" fill="url(#db)" stroke="#dedede" /><path d="M24 28l8 6-16 9z" fill="#5c9de0" stroke="#24558c" strokeWidth="1.500" /></svg>
          </BarButton>
          <Dots />
          <BarButton $w={120} aria-label="Undo">
            <svg width="50" height="52" viewBox="0 0 50 50" fill="none"><path d="M12 12h14a18 17 0 0 1 0 34h-6" stroke="#7f9fc0" strokeWidth="6" strokeLinecap="round" /><path d="M12 12h14a18 17 0 0 1 0 34h-6" stroke="#9dbfe2" strokeWidth="4" strokeLinecap="round" /><path d="M1 12L15 1v22z" fill="#9dbfe2" stroke="#7f9fc0" /></svg>
          </BarButton>
          <BarButton $w={136} aria-label="Redo">
            <svg width="50" height="52" viewBox="0 0 50 50" fill="none"><path d="M38 12H24a18 17 0 0 0 0 34h6" stroke="#7f9fc0" strokeWidth="6" strokeLinecap="round" /><path d="M38 12H24a18 17 0 0 0 0 34h6" stroke="#9dbfe2" strokeWidth="4" strokeLinecap="round" /><path d="M49 12L35 1v22z" fill="#9dbfe2" stroke="#7f9fc0" /></svg>
          </BarButton>
          <BarButton $w={138} aria-label="Rotate">
            <svg width="80" height="54" viewBox="0 0 80 54" fill="none"><path d="M9 13Q18 3 30 5c22 3 26 26 11 41" stroke="#7f9fc0" strokeWidth="6" strokeLinecap="round" /><path d="M9 13Q18 3 30 5c22 3 26 26 11 41" stroke="#9dbfe2" strokeWidth="4" strokeLinecap="round" /><path d="M3 2l1 16 15-1z" fill="#9dbfe2" stroke="#7f9fc0" /><g fill="#93b3d8" stroke="#7493b8"><circle cx="4" cy="28" r="3" /><circle cx="8" cy="40" r="3.500" /><circle cx="17" cy="48" r="4" /><circle cx="30" cy="50" r="4" /></g><path d="M65 23h14l-7 8z" fill="#8c8c8c" /></svg>
          </BarButton>
          <BarButton $w={86} aria-label="Layout">
            <svg width="62" height="56" viewBox="0 0 62 56"><rect x="1" y="5" width="53" height="41" fill="#e8f1fa" stroke="#1f4f86" strokeWidth="2" /><path d="M4 9h18v33H4z" fill="url(#lb)" stroke="#2f6cb0" /><path d="M26 9h25v15H26z" fill="#5ea3e6" stroke="#2f6cb0" /><path d="M26 28h25v14H26z" fill="url(#db)" /><path d="M0 46h55" stroke="#18304c" strokeWidth="2" /><path d="M48 50h13l-6 6z" fill="#333" /></svg>
          </BarButton>
          <BarButton $w={150} aria-label="Organizer">
            <svg width="56" height="44" viewBox="0 0 56 44"><rect x="1" y="1" width="54" height="42" fill="#e4eef8" stroke="#1f5c9c" strokeWidth="2" /><path d="M1 1h54v9H1z" fill="#2573ba" /><g fill="url(#lb)" stroke="#3f7fc4"><path d="M5 14h13v10H5zM21 14h14v10H21zM38 14h13v10H38zM5 28h13v11H5zM21 28h14v11H21zM38 28h13v11H38z" /></g></svg>
          </BarButton>
        </BarGroup>
        <BarGroup>
          <BarButton $w={122} aria-label="Layers">
            <svg width="54" height="52" viewBox="0 0 54 52"><path d="M27 2l25 17-25 16L2 19z" fill="url(#lb)" stroke="#4c80b8" strokeWidth="1.500" /><path d="M8 29l19 13 19-13 7 5-26 17L1 34z" fill="url(#db)" stroke="#123c68" /></svg>
          </BarButton>
          <BarButton $w={122} aria-label="Effects">
            <svg width="56" height="60" viewBox="0 0 56 60"><text x="8" y="46" fontFamily="'Open Sans', sans-serif" fontStyle="italic" fontSize="54" fill="#4283c6" stroke="#2a5f9a" strokeWidth="1">fx</text></svg>
          </BarButton>
          <BarButton $w={122} aria-label="Filters">
            <svg width="58" height="54" viewBox="0 0 58 54" strokeWidth="1.500" stroke="#2b5c94"><circle cx="29" cy="18" r="16.500" fill="#bcdcf8" /><circle cx="18" cy="36" r="16.500" fill="#6db0ee" fillOpacity="0.900" /><circle cx="40" cy="36" r="16.500" fill="#1e66ae" fillOpacity="0.920" /><path d="M29 24a16 16 0 0 1 0 24 16 16 0 0 1 0-24z" fill="#3f7fb8" stroke="none" /></svg>
          </BarButton>
          <BarButton $w={122} aria-label="Styles">
            <svg width="58" height="52" viewBox="0 0 58 52" stroke="#2a5580" strokeWidth="2" fill="#dcebf8"><path d="M30 14l26 4-5 33-26-5z" /><path d="M14 8h29v31H14z" /><path d="M39 14v20h-4V14z" fill="#7db2e6" stroke="none" /><path d="M1 6l28-5 6 34-28 5z" /><path d="M8 10l18-3 4 24-18 3z" fill="#2a7cc8" stroke="none" /></svg>
          </BarButton>
          <BarButton $w={122} aria-label="More">
            <svg width="46" height="46" viewBox="0 0 46 46"><path d="M18 1h10v17h17v10H28v17H18V28H1V18h17z" fill="url(#lb)" stroke="#2b5f98" strokeWidth="1.500" /></svg>
          </BarButton>
        </BarGroup>
      </BottomBar>
      <OpenDialog />
    </Screen>
  );
}
